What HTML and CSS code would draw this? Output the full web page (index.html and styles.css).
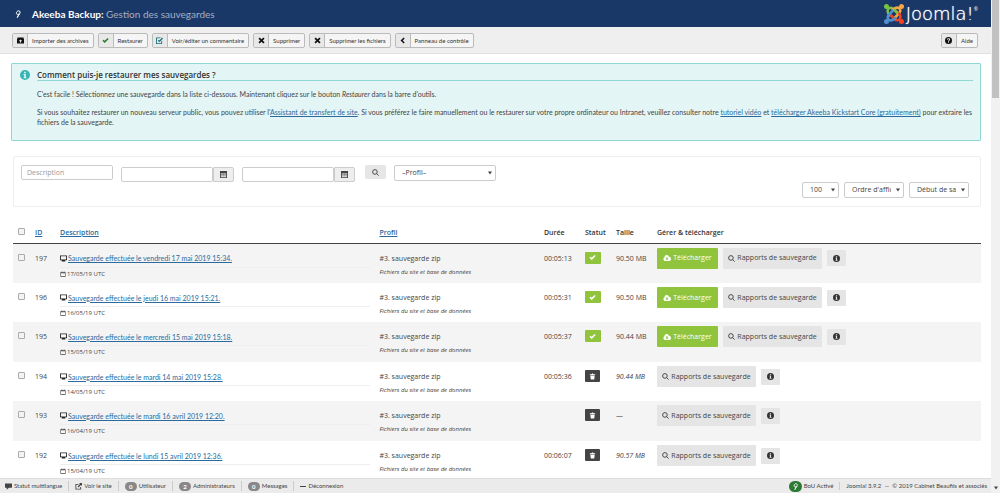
FILE: index.html
```html
<!DOCTYPE html>
<html lang="fr">
<head>
<meta charset="utf-8">
<title>Akeeba Backup: Gestion des sauvegardes</title>
<link rel="stylesheet" href="styles.css">
</head>
<body>
<svg class="sprite" aria-hidden="true">
  <symbol id="i-check" viewBox="0 0 16 16"><path d="M1 8.5 3.500 6 6.200 8.800 12.800 2.200 15.200 4.600 6.200 13.600z"/></symbol>
  <symbol id="i-times" viewBox="0 0 16 16"><path d="M1 3.800 3.800 1 8 5.200 12.200 1 15 3.800 10.800 8 15 12.200 12.200 15 8 10.800 3.800 15 1 12.200 5.200 8z"/></symbol>
  <symbol id="i-import" viewBox="0 0 16 16"><path fill-rule="evenodd" d="M1 1h14v3h1v11H0V4h1zM8 5.500 4.200 9.200h2.300v3.300h3V9.200h2.300z"/></symbol>
  <symbol id="i-edit" viewBox="0 0 16 16"><path d="M11 1H0v15h14V8l-2 2v4H2V3h7z"/><path d="M13.500 1 16 3.500 8 12 4 8l2-2 2 2z"/></symbol>
  <symbol id="i-left" viewBox="0 0 16 16"><path d="M10.500 1 13 3.500 8.500 8l4.500 4.500-2.500 2.500-7-7z"/></symbol>
  <symbol id="i-help" viewBox="0 0 16 16"><path fill-rule="evenodd" d="M8 0a8 8 0 1 1 0 16A8 8 0 0 1 8 0zM7 11v2.200h2.200V11zM4.600 6.200h2.100c0-2 2.700-1.700 2.700-.2C9.400 7.300 7 7.200 7 10h2.100c0-1.700 2.600-1.900 2.600-4.300 0-3.900-7.100-4-7.100.5z"/></symbol>
  <symbol id="i-info" viewBox="0 0 16 16"><path fill-rule="evenodd" d="M8 0a8 8 0 1 1 0 16A8 8 0 0 1 8 0zM6.700 2.800v2.400h2.600V2.800zM5.800 6.500v1.700h1v3.300h-1v1.700h4.500v-1.700h-1v-5z"/></symbol>
  <symbol id="i-calendar" viewBox="0 0 16 16"><path fill-rule="evenodd" d="M0 0h16v16H0zM2 5v9h12V5zM3 6.500h3v2H3zM7 6.500h2v2H7zM10 6.500h3v2h-3zM3 10h3v2H3zM7 10h2v2H7zM10 10h3v2h-3z"/></symbol>
  <symbol id="i-date" viewBox="0 0 16 16"><path fill-rule="evenodd" d="M1 3h3V1h2v2h4V1h2v2h3v12H1zM2.500 6.200v7.300h11V6.200z"/></symbol>
  <symbol id="i-search" viewBox="0 0 16 16"><path fill="none" stroke="currentColor" stroke-width="2.200" d="M10.600 10.600 15 15M12 6.700a5.300 5.300 0 1 1-10.600 0 5.300 5.300 0 0 1 10.600 0z"/></symbol>
  <symbol id="i-desktop" viewBox="0 0 16 16"><path fill-rule="evenodd" d="M0 1h16v11h-4v3H4v-3H0zM2 3v7h12V3z"/></symbol>
  <symbol id="i-cloud" viewBox="0 0 16 16"><path fill-rule="evenodd" d="M4 14a4 4 0 0 1-1-7.500C3 1 11 .8 11.500 5.500 17 5 17.500 14 12.500 14zM7 6v3H4.600L8 12.600 11.400 9H9V6z"/></symbol>
  <symbol id="i-trash" viewBox="0 0 16 16"><path d="M2 3h4l1-2h2l1 2h4v2H2zM3 6h10l-1 9H4z"/></symbol>
  <symbol id="i-chat" viewBox="0 0 16 16"><path d="M0 1h16v10H9l-5 4.500V11H0z"/></symbol>
  <symbol id="i-out" viewBox="0 0 16 16"><path d="M8 2H1v13h13V9h-2v4H3V4h5z"/><path d="M9 0h7v7l-2.500-2.500L8 10 6 8l5.500-5.500z"/></symbol>
  <symbol id="i-leaf" viewBox="0 0 16 16"><path fill="none" stroke="currentColor" stroke-width="2" d="M6.500 15 10 8C6 10 4 8 5 5c1-3 4-4 6-3 2 2 1 6-1.500 8z"/></symbol>
  <symbol id="i-caret" viewBox="0 0 8 8"><path d="M0 1h8L4 7z"/></symbol>
</svg>

<div class="window">
  <div class="page">
    <header class="topbar">
      <svg class="leaf"><use href="#i-leaf"/></svg>
      <h1><strong>Akeeba Backup:</strong> Gestion des sauvegardes</h1>
      <span class="brand">
        <svg class="knot" viewBox="0 0 40 40" fill="none" stroke-width="5">
          <g stroke="#7ac143"><path d="M13 24 10 21Q5 14 9 9q5-4 11 2l8 8"/><circle cx="5" cy="5" r="2.500"/></g>
          <g stroke="#f9a541" transform="rotate(90 20 20)"><path d="M13 24 10 21Q5 14 9 9q5-4 11 2l8 8"/><circle cx="5" cy="5" r="2.500"/></g>
          <g stroke="#f44321" transform="rotate(180 20 20)"><path d="M13 24 10 21Q5 14 9 9q5-4 11 2l8 8"/><circle cx="5" cy="5" r="2.500"/></g>
          <g stroke="#5091cd" transform="rotate(270 20 20)"><path d="M13 24 10 21Q5 14 9 9q5-4 11 2l8 8"/><circle cx="5" cy="5" r="2.500"/></g>
          <path stroke="#7ac143" d="m20 11 8 8"/>
        </svg>
        <span class="word">Joomla!</span><sup>®</sup>
      </span>
    </header>

    <nav class="toolbar">
      <button class="tool"><span class="ico"><svg><use href="#i-import"/></svg></span><span class="lbl">Importer des archives</span></button>
      <button class="tool green"><span class="ico"><svg><use href="#i-check"/></svg></span><span class="lbl">Restaurer</span></button>
      <button class="tool teal"><span class="ico"><svg><use href="#i-edit"/></svg></span><span class="lbl">Voir/éditer un commentaire</span></button>
      <button class="tool"><span class="ico"><svg><use href="#i-times"/></svg></span><span class="lbl">Supprimer</span></button>
      <button class="tool"><span class="ico"><svg><use href="#i-times"/></svg></span><span class="lbl">Supprimer les fichiers</span></button>
      <button class="tool"><span class="ico"><svg><use href="#i-left"/></svg></span><span class="lbl">Panneau de contrôle</span></button>
      <button class="tool help"><span class="ico"><svg><use href="#i-help"/></svg></span><span class="lbl">Aide</span></button>
    </nav>

    <main class="content">
      <section class="notice">
        <svg class="notice-icon"><use href="#i-info"/></svg>
        <div class="notice-body">
          <h2>Comment puis-je restaurer mes sauvegardes ?</h2>
          <p>C'est facile ! Sélectionnez une sauvegarde dans la liste ci-dessous. Maintenant cliquez sur le bouton <em>Restaurer</em> dans la barre d'outils.</p>
          <p>Si vous souhaitez restaurer un nouveau serveur public, vous pouvez utiliser l'<a href="#">Assistant de transfert de site</a>. Si vous préférez le faire manuellement ou le restaurer sur votre propre ordinateur ou Intranet, veuillez consulter notre <a href="#">tutoriel vidéo</a> et <a href="#">télécharger Akeeba Kickstart Core (gratuitement)</a> pour extraire les fichiers de la sauvegarde.</p>
        </div>
      </section>

      <form class="filters">
        <div class="filter-row">
          <input class="field desc" type="text" placeholder="Description" aria-label="Description">
          <span class="date"><input class="field" type="text" aria-label="Date de début"><button type="button" aria-label="Calendrier"><svg><use href="#i-calendar"/></svg></button></span>
          <span class="date"><input class="field" type="text" aria-label="Date de fin"><button type="button" aria-label="Calendrier"><svg><use href="#i-calendar"/></svg></button></span>
          <button class="search" type="button" aria-label="Rechercher"><svg><use href="#i-search"/></svg></button>
          <span class="pick profile"><select aria-label="Profil"><option>–Profil–</option></select><svg><use href="#i-caret"/></svg></span>
        </div>
        <div class="filter-row end">
          <span class="pick count"><select aria-label="Nombre"><option>100</option></select><svg><use href="#i-caret"/></svg></span>
          <span class="pick order"><select aria-label="Ordre"><option>Ordre d'affichage</option></select><svg><use href="#i-caret"/></svg></span>
          <span class="pick sort"><select aria-label="Tri"><option>Début de sauvegarde</option></select><svg><use href="#i-caret"/></svg></span>
        </div>
      </form>

      <table class="backups">
        <colgroup><col class="c-check"><col class="c-id"><col class="c-desc"><col class="c-profile"><col class="c-time"><col class="c-status"><col class="c-size"><col></colgroup>
        <thead>
          <tr><th><input type="checkbox" aria-label="Tout sélectionner"></th><th><a href="#">ID</a></th><th><a href="#">Description</a></th><th><a href="#">Profil</a></th><th>Durée</th><th>Statut</th><th>Taille</th><th>Gérer &amp; télécharger</th></tr>
        </thead>
        <tbody>
          <tr>
            <td><input type="checkbox" aria-label="197"></td><td>197</td>
            <td><div class="title"><svg><use href="#i-desktop"/></svg><a href="#">Sauvegarde effectuée le vendredi 17 mai 2019 15:34.</a></div><div class="when"><svg><use href="#i-date"/></svg>17/05/19 UTC</div></td>
            <td>#3. sauvegarde zip<div class="kind">Fichiers du site et base de données</div></td>
            <td>00:05:13</td><td class="state"><span class="badge ok"><svg><use href="#i-check"/></svg></span></td><td>90.50 MB</td>
            <td><div class="actions"><button class="dl"><svg><use href="#i-cloud"/></svg>Télécharger</button><button class="log"><svg><use href="#i-search"/></svg>Rapports de sauvegarde</button><button class="more" aria-label="Informations"><svg><use href="#i-info"/></svg></button></div></td>
          </tr>
          <tr>
            <td><input type="checkbox" aria-label="196"></td><td>196</td>
            <td><div class="title"><svg><use href="#i-desktop"/></svg><a href="#">Sauvegarde effectuée le jeudi 16 mai 2019 15:21.</a></div><div class="when"><svg><use href="#i-date"/></svg>16/05/19 UTC</div></td>
            <td>#3. sauvegarde zip<div class="kind">Fichiers du site et base de données</div></td>
            <td>00:05:31</td><td class="state"><span class="badge ok"><svg><use href="#i-check"/></svg></span></td><td>90.50 MB</td>
            <td><div class="actions"><button class="dl"><svg><use href="#i-cloud"/></svg>Télécharger</button><button class="log"><svg><use href="#i-search"/></svg>Rapports de sauvegarde</button><button class="more" aria-label="Informations"><svg><use href="#i-info"/></svg></button></div></td>
          </tr>
          <tr>
            <td><input type="checkbox" aria-label="195"></td><td>195</td>
            <td><div class="title"><svg><use href="#i-desktop"/></svg><a href="#">Sauvegarde effectuée le mercredi 15 mai 2019 15:18.</a></div><div class="when"><svg><use href="#i-date"/></svg>15/05/19 UTC</div></td>
            <td>#3. sauvegarde zip<div class="kind">Fichiers du site et base de données</div></td>
            <td>00:05:37</td><td class="state"><span class="badge ok"><svg><use href="#i-check"/></svg></span></td><td>90.44 MB</td>
            <td><div class="actions"><button class="dl"><svg><use href="#i-cloud"/></svg>Télécharger</button><button class="log"><svg><use href="#i-search"/></svg>Rapports de sauvegarde</button><button class="more" aria-label="Informations"><svg><use href="#i-info"/></svg></button></div></td>
          </tr>
          <tr>
            <td><input type="checkbox" aria-label="194"></td><td>194</td>
            <td><div class="title"><svg><use href="#i-desktop"/></svg><a href="#">Sauvegarde effectuée le mardi 14 mai 2019 15:28.</a></div><div class="when"><svg><use href="#i-date"/></svg>14/05/19 UTC</div></td>
            <td>#3. sauvegarde zip<div class="kind">Fichiers du site et base de données</div></td>
            <td>00:05:36</td><td class="state"><span class="badge gone"><svg><use href="#i-trash"/></svg></span></td><td><em>90.44 MB</em></td>
            <td><div class="actions"><button class="log"><svg><use href="#i-search"/></svg>Rapports de sauvegarde</button><button class="more" aria-label="Informations"><svg><use href="#i-info"/></svg></button></div></td>
          </tr>
          <tr>
            <td><input type="checkbox" aria-label="193"></td><td>193</td>
            <td><div class="title"><svg><use href="#i-desktop"/></svg><a href="#">Sauvegarde effectuée le mardi 16 avril 2019 12:20.</a></div><div class="when"><svg><use href="#i-date"/></svg>16/04/19 UTC</div></td>
            <td>#3. sauvegarde zip<div class="kind">Fichiers du site et base de données</div></td>
            <td></td><td class="state"><span class="badge gone"><svg><use href="#i-trash"/></svg></span></td><td>—</td>
            <td><div class="actions"><button class="log"><svg><use href="#i-search"/></svg>Rapports de sauvegarde</button><button class="more" aria-label="Informations"><svg><use href="#i-info"/></svg></button></div></td>
          </tr>
          <tr>
            <td><input type="checkbox" aria-label="192"></td><td>192</td>
            <td><div class="title"><svg><use href="#i-desktop"/></svg><a href="#">Sauvegarde effectuée le lundi 15 avril 2019 12:36.</a></div><div class="when"><svg><use href="#i-date"/></svg>15/04/19 UTC</div></td>
            <td>#3. sauvegarde zip<div class="kind">Fichiers du site et base de données</div></td>
            <td>00:06:07</td><td class="state"><span class="badge gone"><svg><use href="#i-trash"/></svg></span></td><td><em>90.57 MB</em></td>
            <td><div class="actions"><button class="log"><svg><use href="#i-search"/></svg>Rapports de sauvegarde</button><button class="more" aria-label="Informations"><svg><use href="#i-info"/></svg></button></div></td>
          </tr>
        </tbody>
      </table>
    </main>

    <footer class="status">
      <a href="#"><svg><use href="#i-chat"/></svg>Statut multilangue</a>
      <a href="#"><svg><use href="#i-out"/></svg>Voir le site</a>
      <a href="#"><b>0</b>Utilisateur</a>
      <a href="#"><b>2</b>Administrateurs</a>
      <a href="#"><b>0</b>Messages</a>
      <a href="#"><i></i>Déconnexion</a>
      <span class="right"><span class="bou"><svg><use href="#i-leaf"/></svg></span><span>BoU Activé</span><span class="sep"></span><span>Joomla! 3.9.2 &nbsp;—&nbsp; © 2019 Cabinet Beaufils et associés</span></span>
    </footer>
  </div>
  <div class="scroll"><div class="thumb"></div><svg><use href="#i-caret"/></svg></div>
</div>
</body>
</html>
```
FILE: styles.css
```css
* { box-sizing: border-box; }
body { margin: 0; color: #444; background: #fff; font: 7px/10px "Open Sans", "Noto Sans", sans-serif; }
button, input, select { font: inherit; color: inherit; margin: 0; padding: 0; border: 0; }
button { cursor: pointer; }
svg { display: block; flex: none; fill: currentColor; width: 7px; height: 7px; }
.sprite { position: absolute; width: 0; height: 0; }
a { color: #2a6a9c; }
h1, h2, p { margin: 0; }

.window { display: flex; height: 100vh; overflow: hidden; }
.page { flex: 1; min-width: 0; display: flex; flex-direction: column; }

.topbar { flex: none; display: flex; align-items: center; height: 27px; padding: 0 13px 0 14px; background: #1a3867; color: #fff; }
.topbar .leaf { width: 8px; height: 8px; }
.topbar h1 { margin-left: 10px; font: 10px/16px Lato, sans-serif; color: #a3afc2; }
.topbar h1 strong { font-weight: 700; color: #fff; }
.brand { display: flex; align-items: center; margin-left: auto; }
.knot { width: 20px; height: 20px; margin-right: 2px; fill: none; }
.word { font: 200 18px/20px "DejaVu Sans", sans-serif; text-shadow: 0 0 1px #fff; }
.brand sup { font-size: 5px; line-height: 10px; align-self: flex-start; }

.toolbar { flex: none; display: flex; align-items: center; gap: 4px; height: 27px; padding: 0 13px 0 12px; background: #efefef; border-bottom: 1px solid #e0e0e0; font: 6px/13px Lato, sans-serif; }
.tool { display: flex; background: #f5f5f5; border: 1px solid #bbb; border-radius: 2px; color: #333; }
.tool .ico { display: flex; align-items: center; justify-content: center; width: 15px; height: 13px; background: #e8e8e8; border-right: 1px solid #bbb; color: #111; }
.tool .lbl { padding: 0 4px; }
.tool.green .ico { color: #2b7a2b; }
.tool.teal .ico { color: #17707c; }
.tool.help { margin-left: auto; }

.content { flex: 1; min-height: 0; overflow: hidden; padding: 9px 10px 0 11px; }
.notice { display: flex; min-height: 78px; padding: 6px 7px 8px 8px; background: #e4f5f5; border: 1px solid #8fd8d5; border-radius: 1px; }
.notice-icon { width: 10px; height: 10px; margin-right: 7px; color: #37b5b5; }
.notice-body { flex: 1; }
.notice h2 { font: 600 8px/10px "Open Sans", sans-serif; color: #333; border-bottom: 1px solid #8fd8d5; margin-bottom: 8px; }
.notice p { font-family: Lato, "Open Sans", sans-serif; line-height: 10px; margin-bottom: 8px; }
.notice p:last-child { margin-bottom: 0; }

.filters { margin: 15px 0 0 2px; padding: 8px 11px 8px 7px; border: 1px solid #eee; border-radius: 2px; }
.filter-row { display: flex; align-items: flex-start; gap: 8px; }
.filter-row.end { justify-content: flex-end; gap: 5px; }
.field { width: 92px; height: 15px; padding: 0 5px; background: #fff; border: 1px solid #ccc; border-radius: 2px; }
.field::placeholder { color: #999; opacity: 1; }
.date { display: flex; margin-top: 2px; }
.date button { display: flex; align-items: center; justify-content: center; width: 21px; height: 15px; background: #eee; border: 1px solid #ccc; border-radius: 0 2px 2px 0; }
.search { display: flex; align-items: center; justify-content: center; width: 21px; height: 14px; margin-left: 2px; background: #e6e6e6; border-radius: 2px; }
.pick { display: grid; align-items: center; }
.pick select, .pick svg { grid-area: 1 / 1; }
.pick select { width: 100%; height: 16px; padding: 0 12px 0 7px; appearance: none; background: #fff; border: 1px solid #ccc; border-radius: 2px; }
.pick svg { width: 4px; height: 4px; justify-self: end; margin-right: 4px; pointer-events: none; }
.profile { width: 102px; }
.count { width: 37px; }
.order, .sort { width: 60px; }

.backups { width: calc(100% - 2px); margin: 15px 0 0 2px; border-collapse: collapse; table-layout: fixed; }
.c-check { width: 22px; }
.c-id { width: 25px; }
.c-desc { width: 33%; }
.c-profile { width: 17%; }
.c-time { width: 41px; }
.c-status { width: 31px; }
.c-size { width: 41px; }
.backups th { height: 21px; padding: 6px 0 0; text-align: left; vertical-align: top; font-weight: 600; color: #333; border-bottom: 1px solid #444; }
.backups td { height: 39px; padding: 10px 0 0; vertical-align: top; }
.backups tbody tr:nth-child(odd) td { height: 40px; background: #f4f4f4; }
.backups input { display: block; width: 7px; height: 7px; margin-left: 5px; appearance: none; background: #f3f3f3; border: 1px solid #aaa; border-radius: 1px; }
.title { display: flex; align-items: center; gap: 1px; height: 14px; margin: 0 9px 0 0; padding-bottom: 4px; border-bottom: 1px solid #eee; font-family: Lato, "Open Sans", sans-serif; }
.title svg { color: #222; }
.when { display: flex; align-items: center; gap: 1px; margin-top: 1px; font-size: 6px; }
.when svg { width: 6px; height: 6px; }
.kind { margin-top: 3px; font-size: 6px; font-style: italic; }
.backups .state { padding-top: 8px; }
.badge { display: flex; align-items: center; justify-content: center; width: 16px; height: 12px; border-radius: 1px; color: #fff; }
.badge svg { width: 7px; height: 7px; }
.badge.ok { background: #90c43c; }
.badge.gone { width: 15px; background: #444; }
.backups td:last-child { padding-top: 4px; }
.actions { display: flex; align-items: center; gap: 5px; }
.actions button { display: flex; align-items: center; justify-content: center; gap: 2px; height: 21px; background: #e5e5e5; border-radius: 1px; }
.actions .dl { width: 61px; background: #90c43c; color: #fff; }
.actions .log { width: 99px; }
.actions .more { width: 19px; height: 16px; color: #333; }
.dl svg { width: 8px; height: 8px; }

.status { flex: none; display: flex; align-items: center; height: 15px; padding: 0 4px 0 5px; background: #ebebeb; border-top: 1px solid #ddd; font: 6px/14px Lato, sans-serif; white-space: nowrap; }
.status a { display: flex; align-items: center; gap: 2px; padding-right: 6px; margin-right: 6px; line-height: 10px; color: #444; text-decoration: none; border-right: 1px solid #ccc; }
.status a:nth-of-type(6) { border: 0; }
.status b { min-width: 12px; height: 9px; border-radius: 5px; background: #888; color: #fff; text-align: center; line-height: 9px; }
.status i { width: 6px; height: 1px; background: #444; }
.right { display: flex; align-items: center; gap: 2px; margin-left: auto; }
.bou { display: flex; align-items: center; justify-content: center; width: 13px; height: 11px; border-radius: 6px; background: #2d7a34; color: #fff; }
.sep { width: 1px; height: 8px; margin: 0 4px; background: #ccc; }

.scroll { flex: none; width: 9px; padding: 0 1px 3px; display: flex; flex-direction: column; justify-content: space-between; align-items: center; background: #f1f1f1; }
.thumb { width: 7px; height: 20%; background: #c1c1c1; }
.scroll svg { width: 4px; height: 4px; }
```
